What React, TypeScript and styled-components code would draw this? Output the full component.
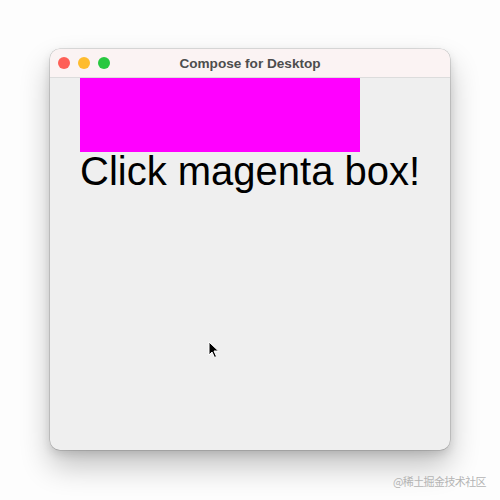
import React from "react";
import styled, { createGlobalStyle } from "styled-components";

const Global = createGlobalStyle`
  html, body { margin: 0; padding: 0; background: #ffffff; }
  body { width: 500px; height: 500px; overflow: hidden; font-family: "Liberation Sans", Arial, sans-serif; }
`;

const Stage = styled.div`
  position: relative;
  width: 500px;
  height: 500px;
  padding: 49px 50px 0 50px;
  box-sizing: border-box;
  background: #fdfdfd;
`;

const Window = styled.div`
  width: 400px;
  height: 401px;
  border-radius: 10px;
  background: #efefef;
  box-shadow: 0 0 0 0.5px rgba(0, 0, 0, 0.22), 0 16px 30px rgba(0, 0, 0, 0.24), 0 4px 10px rgba(0, 0, 0, 0.12);
  overflow: hidden;
  display: flex;
  flex-direction: column;
`;

const TitleBar = styled.div`
  height: 29px;
  flex: none;
  display: flex;
  align-items: center;
  padding-left: 8px;
  position: relative;
  background: #fbf3f3;
  border-bottom: 1px solid #dcdcdc;
  box-sizing: border-box;
`;

const Lights = styled.div`
  display: flex;
  gap: 8px;
`;

const Light = styled.span<{ $c: string }>`
  width: 12px;
  height: 12px;
  border-radius: 50%;
  background: ${(p) => p.$c};
`;

const Title = styled.div`
  position: absolute;
  left: 0;
  right: 0;
  text-align: center;
  font-size: 13.6px;
  font-weight: 700;
  color: #4d4d4d;
  pointer-events: none;
`;

const Content = styled.div`
  flex: 1;
  padding-left: 30px;
  position: relative;
`;

const MagentaBox = styled.div`
  width: 280px;
  height: 74px;
  background: #ff00ff;
`;

const BigText = styled.div`
  font-family: "Liberation Sans", Arial, sans-serif;
  font-size: 40px;
  line-height: 38px;
  color: #000;
  margin-top: 0px;
  white-space: nowrap;
`;

const Cursor = styled.svg`
  position: absolute;
  left: 158px;
  top: 263px;
`;

const Watermark = styled.div`
  position: absolute;
  right: 14px;
  top: 473px;
  font-size: 11px;
  color: #b4b4b4;
  font-family: "Noto Sans CJK SC", "Liberation Sans", sans-serif;
  letter-spacing: -0.6px;
`;

export default function App() {
  return (
    <>
      <Global />
      <Stage>
        <Window>
          <TitleBar>
            <Lights>
              <Light $c="#fe5f57" />
              <Light $c="#febc2e" />
              <Light $c="#28c840" />
            </Lights>
            <Title>Compose for Desktop</Title>
          </TitleBar>
          <Content>
            <MagentaBox />
            <BigText>Click magenta box!</BigText>
            <Cursor width="12" height="18" viewBox="0 0 12 18">
              <path d="M1 1 L1 14 L4 11 L6.5 16.5 L8.5 15.5 L6 10 L10.5 10 Z" fill="#000" stroke="#fff" strokeWidth="1" />
            </Cursor>
          </Content>
        </Window>
        <Watermark>@稀土掘金技术社区</Watermark>
      </Stage>
    </>
  );
}
